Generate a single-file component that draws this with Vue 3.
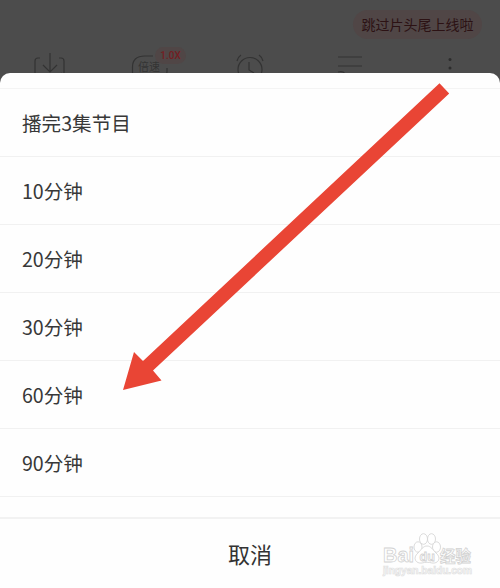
<script setup>
const options = ['播完3集节目', '10分钟', '20分钟', '30分钟', '60分钟', '90分钟']
</script>

<template>
  <main class="screen">
    <header class="player">
      <div class="notice">跳过片头尾上线啦</div>
      <nav class="tools">
        <svg class="tool" viewBox="0 0 50 30">
          <path d="M15 10h-2q-3 0-3 3v17M34 10h2q3 0 3 3v17M25 5v19M18 17l7 7 7-7M36 25l3 3" />
        </svg>
        <div class="speed">
          <svg class="tool" viewBox="0 0 50 30">
            <path d="M28 8H20Q7 8 7.500 20v10M42 20v3q0 5-3 7" />
          </svg>
          <span class="speed-text">倍速</span>
          <span class="speed-value">1.0X</span>
        </div>
        <svg class="tool" viewBox="0 0 50 30">
          <circle cx="25" cy="21.500" r="12" />
          <path d="M12 13q1-4 4-6M34 7q3 2 4 6M24 14v8l5 3" />
        </svg>
        <svg class="tool" viewBox="0 0 50 30">
          <path d="M13 9h24M13 18h24M13 24q7-2 8 5" />
        </svg>
        <svg class="tool" viewBox="0 0 50 30">
          <g class="dots">
            <circle cx="25" cy="11.500" r="1.500" />
            <circle cx="25" cy="20" r="1.500" />
          </g>
        </svg>
      </nav>
    </header>
    <section class="sheet">
      <div class="sheet-top"></div>
      <ul class="options">
        <li v-for="option in options" :key="option">{{ option }}</li>
      </ul>
      <div class="spacer"></div>
      <button class="cancel">取消</button>
    </section>
    <svg class="arrow" viewBox="0 0 500 588">
      <path d="M439.500 83.200L449.200 93.500L153 370.500L161.500 380.500L123 390L134 352L143 361Z" />
    </svg>
    <svg class="watermark" viewBox="0 0 130 68">
      <g class="brand">
        <text x="13" y="42" textLength="31" lengthAdjust="spacingAndGlyphs" class="latin">Bai</text>
        <ellipse cx="48" cy="27" rx="4" ry="5.200" />
        <ellipse cx="53.500" cy="19" rx="4" ry="5.300" />
        <ellipse cx="61.500" cy="19" rx="4" ry="5.300" />
        <ellipse cx="66.500" cy="27" rx="4" ry="5.200" />
        <path d="M57 26c4 0 6 4 9 7 6 5 2 11-4 10-3-1-7-1-10 0-6 1-10-5-4-10 3-3 5-7 9-7Z" />
        <text x="49.500" y="40.500" class="du">du</text>
        <text x="70" y="41.500" textLength="31" lengthAdjust="spacingAndGlyphs" class="chinese">经验</text>
      </g>
      <text x="13" y="54" textLength="89" lengthAdjust="spacingAndGlyphs" class="site">jingyan.baidu.com</text>
    </svg>
  </main>
</template>

<style>
body {
  margin: 0;
}
</style>

<style scoped>
.screen {
  position: relative;
  width: 500px;
  height: 588px;
  overflow: hidden;
  background: #4c4c4c;
  color: #383838;
  font-family: "Noto Sans CJK SC", sans-serif;
}
.player {
  box-sizing: border-box;
  height: 73px;
  padding-top: 10px;
}
.notice {
  box-sizing: border-box;
  width: 129px;
  height: 29px;
  margin-left: 353px;
  border-radius: 15px;
  background: #504646;
  color: #2c1214;
  font-size: 14px;
  line-height: 28px;
  text-align: center;
}
.tools {
  display: flex;
  justify-content: space-between;
  height: 25px;
  margin-top: 9px;
  padding: 0 25px;
}
.tool {
  display: block;
  width: 50px;
  height: 30px;
  fill: none;
  stroke: #333;
  stroke-width: 1.2;
}
.dots {
  fill: #2c2c2c;
  stroke: none;
}
.speed {
  position: relative;
}
.speed-text,
.speed-value {
  position: absolute;
  white-space: nowrap;
}
.speed-text {
  left: 13px;
  top: 12px;
  color: #343434;
  font-size: 11px;
  line-height: 13px;
}
.speed-value {
  left: 30px;
  top: -1px;
  width: 31px;
  height: 17px;
  border-radius: 9px;
  background: #504646;
  color: #741d22;
  font: 500 10px/17px Roboto, sans-serif;
  text-align: center;
}
.sheet {
  position: relative;
  display: flex;
  flex-direction: column;
  height: 515px;
  border-radius: 10px 10px 0 0;
  background: #fefefe;
}
.screen::before {
  content: "";
  position: absolute;
  inset: 73px 0 auto;
  height: 10px;
  background: #4c4c4c;
}
.sheet-top {
  box-sizing: border-box;
  height: 15.500px;
  border-bottom: 1px solid #f4f4f4;
}
.options {
  margin: 0;
  padding: 0;
  list-style: none;
}
.options li {
  box-sizing: border-box;
  height: 68.100px;
  padding-left: 22px;
  border-bottom: 1px solid #f1f1f1;
  font-size: 19.600px;
  line-height: 67.500px;
}
.spacer {
  box-sizing: border-box;
  height: 22px;
  border-bottom: 2px solid #f2f2f2;
}
.cancel {
  flex: 1;
  padding: 0 0 2px;
  border: 0;
  background: transparent;
  color: #333;
  font-family: inherit;
  font-size: 22px;
}
.arrow {
  position: absolute;
  inset: 0;
  width: 500px;
  height: 588px;
  fill: #e94535;
  pointer-events: none;
}
.watermark {
  position: absolute;
  left: 370px;
  top: 520px;
  width: 130px;
  height: 68px;
  pointer-events: none;
}
.brand {
  fill: #fff;
  stroke: #d2d2d2;
  stroke-width: 0.8;
}
.latin {
  font: 700 21px "Liberation Sans", sans-serif;
}
.du {
  font: 700 12.500px "Liberation Sans", sans-serif;
}
.chinese {
  font: 700 16px "Noto Sans CJK SC", sans-serif;
}
.site {
  fill: #fff;
  stroke: #e0e0e0;
  stroke-width: 0.7;
  font: 700 10px "Liberation Sans", sans-serif;
}
</style>
